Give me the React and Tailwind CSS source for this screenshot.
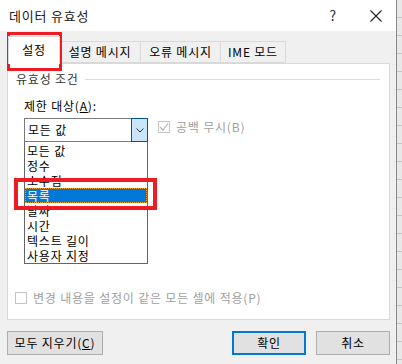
import React from "react";

const font = { fontFamily: '"Noto Sans CJK KR", "Noto Sans", sans-serif' };

const options = ["모든 값", "정수", "소수점", "목록", "날짜", "시간", "텍스트 길이", "사용자 지정"];

const Check = ({ checked }) => (
  <div className="w-[12px] h-[12px] border border-[#c4c4c4] bg-white flex items-center justify-center shrink-0">
    {checked && (
      <svg width="10" height="10" viewBox="0 0 10 10">
        <path d="M1 5 L4 8 L9 1.5" fill="none" stroke="#b5b5b5" strokeWidth="1.2" />
      </svg>
    )}
  </div>
);

export default function App() {
  return (
    <div className="w-[402px] h-[364px] flex overflow-hidden bg-[#f0f0f0] text-[12px] tracking-[0.8px] text-black" style={font}>
      <div className="relative w-[397px] h-full flex flex-col border-r border-[#8a8a8a]">
        {/* title bar */}
        <div className="h-[31px] bg-white flex items-center pl-[9px] pr-[14px] shrink-0">
          <span className="text-[13px] text-[#1a1a1a]">데이터 유효성</span>
          <span className="ml-auto mr-[33px] text-[14px] text-[#333]">?</span>
          <svg width="12" height="12" viewBox="0 0 12 12">
            <path d="M0.5 0.5 L11.5 11.5 M11.5 0.5 L0.5 11.5" stroke="#222" strokeWidth="1.1" />
          </svg>
        </div>

        {/* tabs */}
        <div className="h-[32px] flex items-end pl-[8px] shrink-0">
          <div className="relative z-10 w-[52px] h-[28px] -mb-px bg-white border border-b-0 border-[#d9d9d9] flex items-center justify-center pb-[2px]">
            설정
          </div>
          <div className="w-[81px] h-[22px] border border-l-0 border-[#d9d9d9] flex items-center justify-center">설명 메시지</div>
          <div className="w-[80px] h-[22px] border border-l-0 border-[#d9d9d9] flex items-center justify-center">오류 메시지</div>
          <div className="w-[65px] h-[22px] border border-l-0 border-[#d9d9d9] flex items-center justify-center">IME 모드</div>
        </div>

        {/* panel */}
        <div className="ml-[7px] w-[383px] h-[257px] bg-white border border-[#d9d9d9] flex flex-col shrink-0">
          <div className="flex items-center mt-[7px] pl-[8px] pr-[9px] h-[16px]">
            <span className="text-[#333]">유효성 조건</span>
            <div className="ml-[6px] flex-1 h-px bg-[#dcdcdc]" />
          </div>
          <div className="mt-[11px] pl-[16px] h-[16px] flex items-center">
            제한 대상(<span className="underline">A</span>):
          </div>
          <div className="flex mt-[4px] pl-[16px]">
            <div className="flex flex-col">
              <div className="w-[124px] h-[24px] border border-[#7a7a7a] flex">
                <div className="flex-1 flex items-center pl-[3px]">모든 값</div>
                <div className="w-[17px] -my-px -mr-px bg-[#cce4f7] border border-[#005499] flex items-center justify-center">
                  <svg width="8" height="5" viewBox="0 0 8 5">
                    <path d="M0.5 0.5 L4 4 L7.5 0.5" fill="none" stroke="#333" strokeWidth="1" />
                  </svg>
                </div>
              </div>
              <div className="w-[124px] h-[122px] border border-t-0 border-[#646464] bg-white flex flex-col pt-px">
                {options.map((o) => (
                  <div
                    key={o}
                    className={
                      o === "목록"
                        ? "h-[15px] leading-[13px] pl-[1px] bg-[#0078d7] text-white border border-dotted border-[#f0a030]"
                        : "h-[15px] leading-[15px] pl-[2px]"
                    }
                  >
                    {o}
                  </div>
                ))}
              </div>
            </div>
            <div className="ml-[10px] mt-[3px] h-[12px] flex items-center gap-[6px] text-[#a0a0a0]">
              <Check checked />
              <span>공백 무시(B)</span>
            </div>
          </div>
          <div className="mt-auto mb-[12px] pl-[7px] flex items-center gap-[6px] text-[#a0a0a0]">
            <Check />
            <span>변경 내용을 설정이 같은 모든 셀에 적용(P)</span>
          </div>
        </div>

        {/* buttons */}
        <div className="flex mt-[11px] pl-[7px] pr-[6px]">
          <div className="w-[96px] h-[24px] bg-[#e1e1e1] border border-[#adadad] flex items-center justify-center">
            모두 지우기(<span className="underline">C</span>)
          </div>
          <div className="ml-auto w-[74px] h-[24px] bg-[#e1e1e1] border-2 border-[#0078d7] flex items-center justify-center">
            확인
          </div>
          <div className="ml-[10px] w-[74px] h-[24px] bg-[#e1e1e1] border border-[#adadad] flex items-center justify-center">
            취소
          </div>
        </div>

        {/* red annotation boxes */}
        <div className="absolute left-[7px] top-[32px] w-[55px] h-[39px] border-[3px] border-[#ed1c24]" />
        <div className="absolute left-[14px] top-[178px] w-[143px] h-[32px] border-[4px] border-[#ed1c24]" />
      </div>
      <div className="flex-1 bg-[#e8e8e8] flex flex-col">
        {Array.from({ length: 20 }).map((_, i) => (
          <div key={i} className="h-[18px] border-b border-[#c8c8c8] shrink-0" />
        ))}
      </div>
    </div>
  );
}
